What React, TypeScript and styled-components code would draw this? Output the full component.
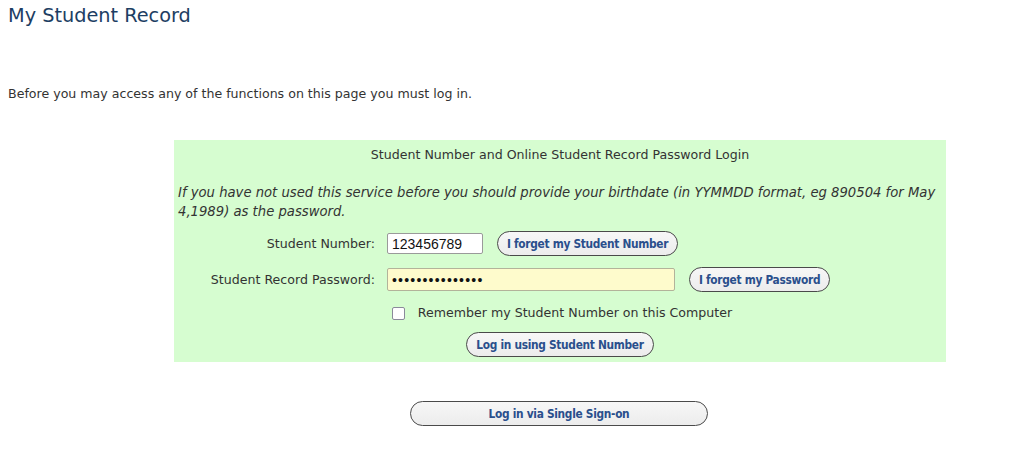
import React from "react";
import styled, { createGlobalStyle } from "styled-components";

const Global = createGlobalStyle`
  html, body { background: #ffffff; }
  body {
    margin: 8px;
    font-family: "DejaVu Sans", Verdana, sans-serif;
    font-size: 12.6px;
    color: #333333;
  }
`;

const Title = styled.h1`
  margin: 0;
  font-size: 19.3px;
  font-weight: normal;
  line-height: 16px;
  color: #1d3e63;
`;

const Intro = styled.p`
  margin: 61px 0 0 0;
  line-height: 18px;
`;

const LoginBox = styled.div`
  margin: 37px 0 0 166px;
  width: 772px;
  box-sizing: border-box;
  background: #d6fdd0;
  padding: 6px 4px 5px 4px;
  display: flex;
  flex-direction: column;
`;

const BoxTitle = styled.div`
  text-align: center;
  line-height: 18px;
`;

const Note = styled.div`
  margin-top: 19px;
  font-style: italic;
  font-size: 13.2px;
  line-height: 19px;
`;

const FieldRow = styled.div<{ $gap: number }>`
  display: flex;
  align-items: center;
  margin-top: ${(p) => p.$gap}px;
`;

const Label = styled.label`
  width: 197px;
  text-align: right;
  flex: none;
`;

const TextInput = styled.input<{ $w: number; $h: number; $yellow?: boolean }>`
  margin-left: 12px;
  width: ${(p) => p.$w}px;
  height: ${(p) => p.$h}px;
  box-sizing: border-box;
  border: 1px solid ${(p) => (p.$yellow ? "#b3b39a" : "#9a9a9a")};
  border-radius: 2px;
  background: ${(p) => (p.$yellow ? "#fefbcc" : "#ffffff")};
  padding: 0 4px;
  font-family: "Liberation Sans", Arial, sans-serif;
  font-size: 14px;
  letter-spacing: ${(p) => (p.$yellow ? "1.2px" : "0")};
  color: #111111;
  outline: none;
`;

const PillButton = styled.button<{ $w?: number }>`
  height: 25px;
  ${(p) => (p.$w ? `width: ${p.$w}px;` : "padding: 0 9px;")}
  box-sizing: border-box;
  border: 1.5px solid #4a4a4a;
  border-radius: 13px;
  background: linear-gradient(#f7f7f7, #ececec);
  color: #2a4f8c;
  font-family: "DejaVu Sans Condensed", "DejaVu Sans", Verdana, sans-serif;
  font-weight: bold;
  font-size: 11.8px;
  letter-spacing: -0.3px;
  cursor: pointer;
  flex: none;
`;

const SideButton = styled(PillButton)`
  margin-left: 14px;
`;

const CheckRow = styled.label`
  display: flex;
  align-items: center;
  justify-content: center;
  gap: 13px;
  margin-top: 12px;
  padding-left: 4px;
  line-height: 18px;
`;

const Check = styled.span`
  width: 11px;
  height: 11px;
  border: 1.5px solid #8a8a9a;
  border-radius: 2px;
  background: #ffffff;
  flex: none;
`;

const Center = styled.div<{ $top: number }>`
  display: flex;
  justify-content: center;
  margin-top: ${(p) => p.$top}px;
`;

const SSOWrap = styled.div`
  margin: 39px 0 0 402px;
`;

export default function App() {
  return (
    <>
      <Global />
      <Title>My Student Record</Title>
      <Intro>Before you may access any of the functions on this page you must log in.</Intro>
      <LoginBox>
        <BoxTitle>Student Number and Online Student Record Password Login</BoxTitle>
        <Note>
          If you have not used this service before you should provide your birthdate (in YYMMDD format, eg 890504 for May
          4,1989) as the password.
        </Note>
        <FieldRow $gap={10}>
          <Label>Student Number:</Label>
          <TextInput $w={96} $h={21} defaultValue="123456789" />
          <SideButton>I forget my Student Number</SideButton>
        </FieldRow>
        <FieldRow $gap={11}>
          <Label>Student Record Password:</Label>
          <TextInput $w={288} $h={23} $yellow type="password" defaultValue="123456789012345" />
          <SideButton>I forget my Password</SideButton>
        </FieldRow>
        <CheckRow>
          <Check />
          <span>Remember my Student Number on this Computer</span>
        </CheckRow>
        <Center $top={10}>
          <PillButton>Log in using Student Number</PillButton>
        </Center>
      </LoginBox>
      <SSOWrap>
        <PillButton $w={298}>Log in via Single Sign-on</PillButton>
      </SSOWrap>
    </>
  );
}
